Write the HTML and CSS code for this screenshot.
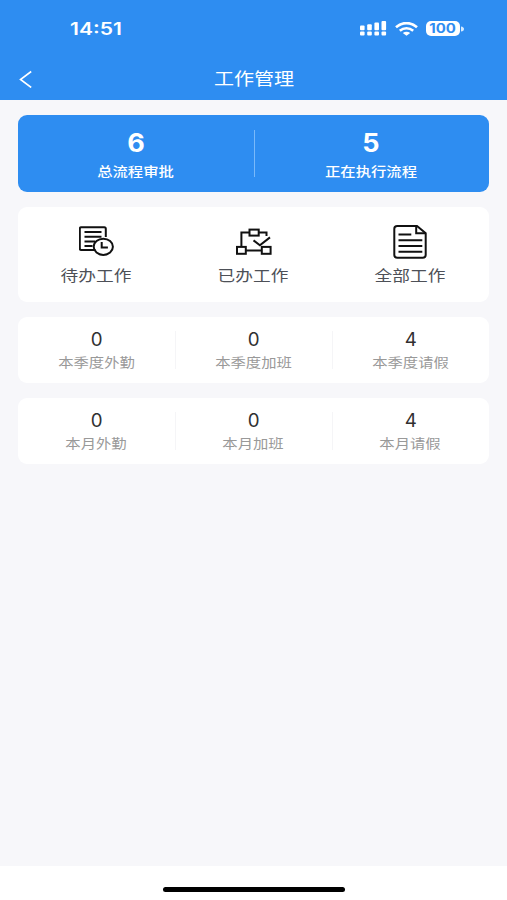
FILE: index.html
```html
<!DOCTYPE html>
<html lang="zh-CN">
<head>
<meta charset="utf-8">
<title>工作管理</title>
<link rel="stylesheet" href="styles.css">
</head>
<body>
<div class="app">
  <header class="header">
    <div class="status">
      <span class="time wide">14:51</span>
      <div class="status-icons">
        <svg width="27" height="15" viewBox="0 0 27 15" fill="#fff">
          <rect x="0" y="4.5" width="4.6" height="4.8" rx="1"/><rect x="7.2" y="3.2" width="4.6" height="6.1" rx="1"/><rect x="14.4" y="1.6" width="4.6" height="7.7" rx="1"/><rect x="21.5" y="0" width="4.6" height="9.3" rx="1"/>
          <rect x="0" y="10.6" width="4.6" height="3.9" rx="1"/><rect x="7.2" y="10.6" width="4.6" height="3.9" rx="1"/><rect x="14.4" y="10.6" width="4.6" height="3.9" rx="1"/><rect x="21.5" y="10.6" width="4.6" height="3.9" rx="1"/>
        </svg>
        <svg class="wifi" width="23" height="14" viewBox="0 0 23 14" fill="none" stroke="#fff" stroke-width="2.6">
          <path d="M1 5.2C7 -0.3 16 -0.3 22 5.2"/><path d="M4.8 8.8C8.8 5.3 14.2 5.3 18.2 8.8"/><path d="M11.5 13.8L7.8 11Q11.5 8.4 15.2 11Z" fill="#fff" stroke="none"/>
        </svg>
        <span class="battery"><b class="wide">100</b></span>
        <svg class="cap" width="3" height="6" viewBox="0 0 3 6"><path d="M0 0.5Q3 1 3 3T0 5.5Z" fill="#d5eaff"/></svg>
      </div>
    </div>
    <div class="nav">
      <svg width="14" height="18" viewBox="0 0 14 18" fill="none" stroke="#fff" stroke-width="1.6"><path d="M12.2 1.5L1.5 9.5L12.2 17.5"/></svg>
      <h1 class="wide">工作管理</h1>
    </div>
  </header>
  <main class="content">
    <section class="card summary">
      <div class="cell"><strong class="wide">6</strong><span class="wide">总流程审批</span></div>
      <div class="cell"><strong class="wide">5</strong><span class="wide">正在执行流程</span></div>
    </section>
    <section class="card menu">
      <div class="item">
        <svg width="36" height="34" viewBox="0 0 36 34" fill="none" stroke="#111" stroke-width="2">
          <path d="M16.5 24.9H2.2Q.8 24.9 .8 23.5V3.7Q.8 2.2 2.2 2.2H25.3Q26.8 2.2 26.8 3.7V12"/>
          <path d="M5.5 7H22.5M5.5 11.7H22.5M5.5 16.4H16M5.5 21H13.5"/>
          <ellipse cx="24.3" cy="21.8" rx="9.6" ry="8.1"/><path d="M22.7 16.9V22.4H28.9"/>
        </svg>
        <span class="wide">待办工作</span>
      </div>
      <div class="item">
        <svg width="36" height="34" viewBox="0 0 36 34" fill="none" stroke="#111" stroke-width="2">
          <rect x="13.5" y="4.6" width="9.2" height="6"/><rect x="1" y="21.9" width="8.8" height="6.9"/><rect x="25.8" y="21.9" width="8.8" height="6.9"/>
          <path d="M13.5 7.6H5.4V21.9M22.7 7.6H30.5V11.1M9.8 25.6H25.8M17.5 15.4L23.9 20.3L34 12.4"/>
        </svg>
        <span class="wide">已办工作</span>
      </div>
      <div class="item">
        <svg width="36" height="34" viewBox="0 0 36 34" fill="none" stroke="#111" stroke-width="2">
          <path d="M24 1H4.3Q1.3 1 1.3 3.7V30Q1.3 32.7 4.3 32.7H29.7Q32.7 32.7 32.7 30V8.3Z"/><path d="M23.2 1V8.3H32.7"/>
          <path d="M5.5 9.5H18.3M5.5 15.2H29.3M5.5 21H29.3M5.5 26.7H29.3"/>
        </svg>
        <span class="wide">全部工作</span>
      </div>
    </section>
    <section class="card stats">
      <div class="stat"><b class="wide">0</b><span class="wide">本季度外勤</span></div>
      <div class="stat"><b class="wide">0</b><span class="wide">本季度加班</span></div>
      <div class="stat"><b class="wide">4</b><span class="wide">本季度请假</span></div>
    </section>
    <section class="card stats">
      <div class="stat"><b class="wide">0</b><span class="wide">本月外勤</span></div>
      <div class="stat"><b class="wide">0</b><span class="wide">本月加班</span></div>
      <div class="stat"><b class="wide">4</b><span class="wide">本月请假</span></div>
    </section>
  </main>
  <footer class="home"><div class="home-bar"></div></footer>
</div>
</body>
</html>
```

FILE: styles.css
```css
* { box-sizing: border-box; }
body { margin: 0; font-family: Inter, "Noto Sans CJK SC", sans-serif; }
svg { display: block; flex: none; }
.app { height: 900px; display: flex; flex-direction: column; background: #f7f7fa; overflow: hidden; }
/* Expanded letterforms used across the app */
.wide { display: block; transform: scaleX(1.18); white-space: nowrap; }

.header { height: 100px; background: #2e8df1; color: #fff; }
.status { height: 57px; display: flex; align-items: center; justify-content: space-between; padding: 0 43.5px 0 69.5px; }
.time { font-size: 17px; line-height: 20px; font-weight: 600; transform: scaleX(1.24); transform-origin: left; }
.status-icons { display: flex; align-items: center; }
.wifi { margin-left: 8px; }
.battery { width: 34px; height: 15px; margin-left: 8px; border-radius: 5px; background: #fff; color: #2e8df1; display: flex; align-items: center; justify-content: center; }
.battery b { font-size: 13px; line-height: 15px; font-weight: 700; transform: scaleX(1.15); }
.cap { margin-left: 1px; }
.nav { height: 43px; display: grid; grid-template-columns: 1fr auto 1fr; align-items: center; padding: 0 19px; }
.nav h1 { margin: 0; font-size: 17px; line-height: 24px; font-weight: 400; }

.content { flex: 1; padding: 15px 18px 0 18px; }
.card { display: flex; background: #fff; border-radius: 9px; margin-bottom: 15px; }
.summary { height: 77px; background: #2e8df1; color: #fff; }
.cell { flex: 1; display: flex; flex-direction: column; align-items: center; padding-top: 13px; position: relative; }
.cell strong { font-size: 25px; line-height: 30px; font-weight: 700; transform: scaleX(1.08); }
.cell span { font-size: 13px; line-height: 20px; margin-top: 3px; font-weight: 500; }
.cell + .cell::before { content: ""; position: absolute; left: 0; top: 15px; width: 1px; height: 47px; background: #79b9fa; }
.menu { height: 95px; }
.item { flex: 1; display: flex; flex-direction: column; align-items: center; padding-top: 18px; }
.item span { font-size: 15px; line-height: 22px; margin-top: 6px; color: #4d5057; }
.stats { height: 66px; }
.stat { flex: 1; display: flex; flex-direction: column; align-items: center; padding-top: 12px; position: relative; }
.stat b { font-size: 18px; line-height: 22px; font-weight: 400; color: #303030; transform: scaleX(1.04); }
.stat span { font-size: 13px; line-height: 18px; margin-top: 2px; color: #999; }
.stat + .stat::before { content: ""; position: absolute; left: 0; top: 14px; width: 1px; height: 38px; background: #f5f5f7; }
.home { height: 34px; background: #fff; display: flex; justify-content: center; padding-top: 21px; }
.home-bar { width: 182px; height: 5px; border-radius: 3px; background: #000; }
```
